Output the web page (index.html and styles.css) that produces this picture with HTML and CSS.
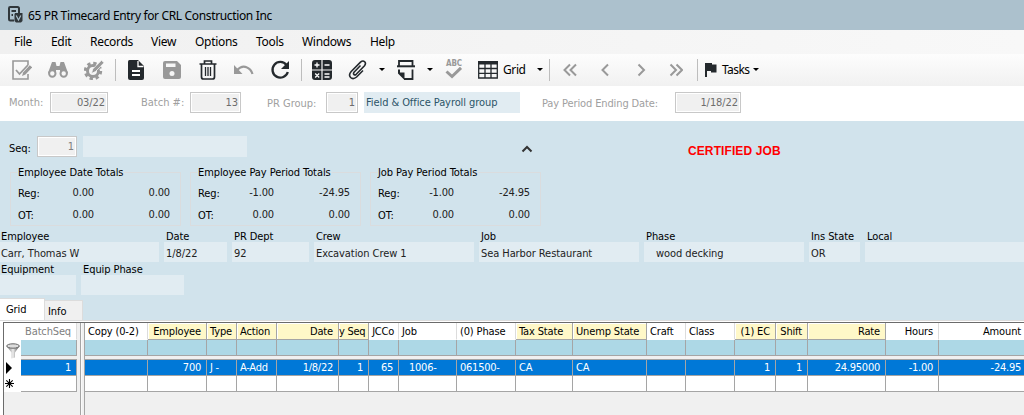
FILE: index.html
```
<!DOCTYPE html>
<html lang="en">
<head>
    <meta charset="UTF-8">
    <title>65 PR Timecard Entry for CRL Construction Inc</title>
    <link rel="stylesheet" href="styles.css">
</head>
<body>
    <div class="titlebar">
        <svg class="app-icon" width="15" height="17" viewBox="0 0 15 17">
            <path d="M6 14.500H2.200Q1 14.500 1 13.300V2.200Q1 1 2.200 1H9.500Q11 1 11 2.500V7" fill="none" stroke="#30373b" stroke-width="2"/>
            <path d="M3.500 5H8M3.500 9H5" stroke="#30373b" stroke-width="1.800"/>
            <path d="M7 7h7.500v8L13 16.500H8L6.500 15V8.500z" fill="#30373b"/>
            <path d="M8.200 9.500l2.300 4.500 2.300-4.500" fill="none" stroke="#acc1cd" stroke-width="1.200"/>
        </svg>
        <span>65 PR Timecard Entry for CRL Construction Inc</span>
    </div>

    <div class="menubar">
        <span>File</span>
        <span>Edit</span>
        <span>Records</span>
        <span>View</span>
        <span>Options</span>
        <span>Tools</span>
        <span>Windows</span>
        <span>Help</span>
    </div>

    <div class="toolbar">
        <div class="btn off">
            <svg width="20" height="20" viewBox="0 0 20 20">
                <path d="M16 5V1H1V19H16V14" fill="none" stroke="currentColor" stroke-width="1.600"/>
                <path d="M4 10l3.500 4L16 5" fill="none" stroke="currentColor" stroke-width="1.800"/>
                <path d="M10 16l1.200-3.800 6.600-7 2.400 2.200-6.700 7z" fill="currentColor"/>
            </svg>
        </div>
        <div class="btn off">
            <svg width="20" height="20" viewBox="0 0 20 20">
                <path d="M4 2h3.500l1 4h3l1-4H16l4 11-8 1V10H8v4l-8-1z" fill="currentColor"/>
                <circle cx="4.300" cy="13.500" r="3.200" fill="#f7f7f7" stroke="currentColor" stroke-width="2"/>
                <circle cx="15.700" cy="13.500" r="3.200" fill="#f7f7f7" stroke="currentColor" stroke-width="2"/>
            </svg>
        </div>
        <div class="btn off">
            <svg width="20" height="20" viewBox="0 0 20 20">
                <circle cx="9" cy="11" r="5.500" fill="none" stroke="currentColor" stroke-width="3"/>
                <circle cx="9" cy="11" r="7.700" fill="none" stroke="currentColor" stroke-width="3" stroke-dasharray="3.300 2.747"/>
                <path d="M7.500 13.500l1.200-4.500L17.500 .3 20 2.800l-8.500 8.700z" fill="currentColor" stroke="#f7f7f7" stroke-width=".8"/>
            </svg>
        </div>
        <div class="sep"></div>
        <div class="btn">
            <svg width="20" height="20" viewBox="0 0 20 20">
                <path d="M3.500 0H12l6 6v12q0 2-2 2H4q-2 0-2-2V1.500Q2 0 3.500 0z" fill="currentColor"/>
                <path d="M12 1v5.500h5.500" fill="none" stroke="#fff" stroke-width="1.300"/>
                <path d="M6 11h8M6 15h8" stroke="#fff" stroke-width="2"/>
            </svg>
        </div>
        <div class="btn off">
            <svg width="20" height="20" viewBox="0 0 20 20">
                <path d="M3 1h12l4 4v12q0 2-2 2H3q-2 0-2-2V3q0-2 2-2z" fill="currentColor"/>
                <path d="M4 3.500h9.500V7H4z" fill="#f7f7f7"/>
                <circle cx="10" cy="13.500" r="2.500" fill="#f7f7f7"/>
            </svg>
        </div>
        <div class="btn">
            <svg width="20" height="20" viewBox="0 0 20 20">
                <path d="M1.500 4h17M6.500 3.500V1h7v2.500" fill="none" stroke="currentColor" stroke-width="1.700"/>
                <path d="M3.500 4v13q0 2 2 2h9q2 0 2-2V4" fill="none" stroke="currentColor" stroke-width="1.700"/>
                <path d="M7.500 7v9M12.500 7v9M10 7v9" stroke="currentColor" stroke-width="1.300"/>
            </svg>
        </div>
        <div class="btn off">
            <svg width="20" height="20" viewBox="0 0 20 20">
                <path d="M3 10q5-5 9.500-2.800 4.500 1.600 6 6.800" fill="none" stroke="currentColor" stroke-width="2.200"/>
                <path d="M0 5v9h8.500z" fill="currentColor"/>
            </svg>
        </div>
        <div class="btn">
            <svg width="20" height="20" viewBox="0 0 20 20">
                <path d="M16.500 5A7.800 7.800 0 1 0 17.800 12" fill="none" stroke="currentColor" stroke-width="2.300"/>
                <path d="M19 1v8h-8z" fill="currentColor"/>
            </svg>
        </div>
        <div class="sep"></div>
        <div class="btn">
            <svg width="20" height="20" viewBox="0 0 20 20">
                <path d="M3 0h6.400v9.400H0V3q0-3 3-3zM10.600 0H17q3 0 3 3v6.400h-9.400zM0 10.600h9.400V20H3q-3 0-3-3zM10.600 10.600H20V17q0 3-3 3h-6.400z" fill="currentColor"/>
                <path d="M2.500 5h5M5 2.500v5M12.500 5h5M3.200 13.500l4 4M7.200 13.500l-4 4M12.500 14h5M12.500 17h5" stroke="#fff" stroke-width="1.300"/>
            </svg>
        </div>
        <div class="btn">
            <svg width="20" height="20" viewBox="0 0 20 20">
                <path d="M12.500 5.500L6 12.300q-1 1.500 0 2.300 1 .8 2.200-.3l8.300-8.500q1.800-2.300.2-4-1.800-1.700-4.200.4L3.200 11.500q-3 3.500-.6 6 2.500 2.400 6-.5L15 10.500" fill="none" stroke="currentColor" stroke-width="1.600"/>
            </svg>
        </div>
        <div class="arrow"></div>
        <div class="btn">
            <svg width="20" height="20" viewBox="0 0 20 20">
                <path d="M3 6V1h13.500v5" fill="none" stroke="currentColor" stroke-width="1.800"/>
                <path d="M1 6.300h18" stroke="currentColor" stroke-width="2"/>
                <path d="M16.500 9.500V19H8" fill="none" stroke="currentColor" stroke-width="1.800"/>
                <path d="M2 9.500h2v3h4.500V20L2 13.500z" fill="currentColor"/>
            </svg>
        </div>
        <div class="arrow"></div>
        <div class="btn off spell">
            <span>ABC</span>
            <svg width="18" height="12" viewBox="0 0 18 12">
                <path d="M1.500 4.500l5.500 5L16 .8" fill="none" stroke="currentColor" stroke-width="3"/>
            </svg>
        </div>
        <div class="btn grid-btn">
            <svg width="20" height="18" viewBox="0 0 20 18">
                <path d="M.7 1h18.600v16H.7zM.7 7.500h18.600M.7 12.300h18.600M7 3v14M13 3v14" fill="none" stroke="currentColor" stroke-width="1.300"/>
                <path d="M0 0h20v3.500H0z" fill="currentColor"/>
            </svg>
        </div>
        <span class="btn-text grid-text">Grid</span>
        <div class="arrow"></div>
        <div class="sep"></div>
        <div class="btn nav off"><svg width="14" height="14" viewBox="0 0 14 14"><path d="M7 1.500L1.500 7 7 12.500M13 1.500L7.500 7 13 12.500"/></svg></div>
        <div class="btn nav off"><svg width="14" height="14" viewBox="0 0 14 14"><path d="M10 1.500L4.500 7l5.500 5.500"/></svg></div>
        <div class="btn nav off"><svg width="14" height="14" viewBox="0 0 14 14"><path d="M4.500 1.500L10 7l-5.500 5.500"/></svg></div>
        <div class="btn nav off"><svg width="14" height="14" viewBox="0 0 14 14"><path d="M1.500 1.500L7 7l-5.500 5.500M7.500 1.500L13 7l-5.500 5.500"/></svg></div>
        <div class="sep"></div>
        <div class="btn flag">
            <svg width="12" height="14" viewBox="0 0 12 14"><path d="M0 0h7v1.500h4.500v8H6V8H2v6H0z" fill="currentColor"/></svg>
        </div>
        <span class="btn-text tasks-text">Tasks</span>
        <div class="arrow"></div>
    </div>

    <div class="batch">
        <span>Month:</span>
        <div class="box">03/22</div>
        <span>Batch #:</span>
        <div class="box">13</div>
        <span class="low">PR Group:</span>
        <div class="box">1</div>
        <div class="group-name">Field &amp; Office Payroll group</div>
        <span class="low ending">Pay Period Ending Date:</span>
        <div class="box">1/18/22</div>
    </div>

    <div class="panel">
        <div class="seq-row">
            <span class="seq-label">Seq:</span>
            <div class="box">1</div>
            <div class="field seq-name"></div>
            <svg class="collapse" width="12" height="8" viewBox="0 0 12 8"><path d="M1.500 6.500L6 2l4.500 4.500" fill="none" stroke="#333" stroke-width="2"/></svg>
            <span class="certified">CERTIFIED JOB</span>
        </div>

        <div class="totals">
            <fieldset>
                <legend>Employee Date Totals</legend>
                <div class="total"><span>Reg:</span><b>0.00</b><b>0.00</b></div>
                <div class="total"><span>OT:</span><b>0.00</b><b>0.00</b></div>
            </fieldset>
            <fieldset>
                <legend>Employee Pay Period Totals</legend>
                <div class="total"><span>Reg:</span><b>-1.00</b><b>-24.95</b></div>
                <div class="total"><span>OT:</span><b>0.00</b><b>0.00</b></div>
            </fieldset>
            <fieldset>
                <legend>Job Pay Period Totals</legend>
                <div class="total"><span>Reg:</span><b>-1.00</b><b>-24.95</b></div>
                <div class="total"><span>OT:</span><b>0.00</b><b>0.00</b></div>
            </fieldset>
        </div>

        <div class="info first">
            <div><label>Employee</label><div class="field">Carr, Thomas W</div></div>
            <div><label>Date</label><div class="field">1/8/22</div></div>
            <div><label>PR Dept</label><div class="field">92</div></div>
            <div><label>Crew</label><div class="field">Excavation Crew 1</div></div>
            <div><label>Job</label><div class="field">Sea Harbor Restaurant</div></div>
            <div><label>Phase</label><div class="field indent">wood decking</div></div>
            <div><label>Ins State</label><div class="field">OR</div></div>
            <div><label>Local</label><div class="field"></div></div>
        </div>
        <div class="info second">
            <div><label>Equipment</label><div class="field"></div></div>
            <div><label>Equip Phase</label><div class="field"></div></div>
        </div>

        <div class="tabs">
            <div class="tab active">Grid</div>
            <div class="tab">Info</div>
        </div>
    </div>

    <div class="sheet">
        <div class="row-heads">
            <svg class="filter" width="14" height="16" viewBox="0 0 14 16">
                <defs>
                    <linearGradient id="metal">
                        <stop offset="0" stop-color="#666"/>
                        <stop offset=".5" stop-color="#eee"/>
                        <stop offset="1" stop-color="#444"/>
                    </linearGradient>
                </defs>
                <path d="M.5 3L5.500 9.500v6l3.500-1V9.500L13.500 3z" fill="url(#metal)"/>
                <ellipse cx="7" cy="3" rx="6.300" ry="2.200" fill="#ddd" stroke="#666"/>
            </svg>
            <svg class="current" width="6" height="12" viewBox="0 0 6 12"><path d="M0 0l6 6-6 6z"/></svg>
            <svg class="new" width="9" height="9" viewBox="0 0 9 9"><path d="M4.500 0v9M0 4.500h9M1.300 1.300l6.400 6.400M7.700 1.300L1.300 7.700" stroke="#000" stroke-width="1.100"/></svg>
        </div>

        <div class="pane fixed">
            <div class="row head"><div class="right muted">BatchSeq</div></div>
            <div class="row search"><div></div></div>
            <div class="row selected"><div class="right">1</div></div>
            <div class="row"><div></div></div>
        </div>

        <div class="splitter"></div>

        <div class="pane scroll">
            <div class="row head">
                <div>Copy (0-2)</div>
                <div class="req right">Employee</div>
                <div class="req">Type</div>
                <div class="req">Action</div>
                <div class="req right">Date</div>
                <div class="req right tight">y Seq</div>
                <div class="right tight">JCCo</div>
                <div>Job</div>
                <div>(0) Phase</div>
                <div class="req">Tax State</div>
                <div class="req">Unemp State</div>
                <div>Craft</div>
                <div>Class</div>
                <div class="req right">(1) EC</div>
                <div class="req right">Shift</div>
                <div class="req right">Rate</div>
                <div class="right">Hours</div>
                <div class="right last">Amount</div>
            </div>
            <div class="row search">
                <div></div><div></div><div></div><div></div><div></div><div></div>
                <div></div><div></div><div></div><div></div><div></div><div></div>
                <div></div><div></div><div></div><div></div><div></div><div></div>
            </div>
            <div class="row selected">
                <div></div>
                <div class="right">700</div>
                <div>J -</div>
                <div>A-Add</div>
                <div class="right">1/8/22</div>
                <div class="right">1</div>
                <div class="right">65</div>
                <div class="job">1006-</div>
                <div>061500-</div>
                <div>CA</div>
                <div>CA</div>
                <div></div>
                <div></div>
                <div class="right">1</div>
                <div class="right">1</div>
                <div class="right">24.95000</div>
                <div class="right">-1.00</div>
                <div class="right last">-24.95</div>
            </div>
            <div class="row">
                <div></div><div></div><div></div><div></div><div></div><div></div>
                <div></div><div></div><div></div><div></div><div></div><div></div>
                <div></div><div></div><div></div><div></div><div></div><div></div>
            </div>
        </div>
    </div>
</body>
</html>
```

FILE: styles.css
```
* {
    box-sizing: border-box;
}
body {
    margin: 0;
    width: 1024px;
    height: 415px;
    overflow: hidden;
    background: #fff;
    color: #111;
    font-family: "DejaVu Sans Condensed", "DejaVu Sans", sans-serif;
    font-stretch: condensed;
    font-size: 11px;
    line-height: 14px;
    letter-spacing: -0.08px;
    white-space: nowrap;
}

/* title and menu */
.titlebar {
    display: flex;
    align-items: center;
    height: 30px;
    padding: 1px 0 0 8px;
    gap: 5px;
    background: #acc1cd;
    color: #000;
    font-family: "Noto Sans", sans-serif;
    font-stretch: normal;
    font-size: 12px;
    letter-spacing: -0.35px;
}
.app-icon {
    margin-top: -3px;
}
.menubar {
    display: grid;
    grid-template-columns: 37px 39px 61px 44px 61px 46px 68px 60px;
    align-items: center;
    height: 24px;
    padding-left: 14px;
    background: linear-gradient(90deg, #f0f0f0, #f8f8f8);
    color: #000;
    font-family: "Noto Sans", sans-serif;
    font-stretch: normal;
    font-size: 12px;
    letter-spacing: -0.3px;
}

/* toolbar */
.toolbar {
    display: flex;
    align-items: center;
    height: 32px;
    padding-left: 4px;
    padding-bottom: 1px;
    background: linear-gradient(#fdfdfd, #f1f1f1);
    color: #24292d;
}
.btn {
    display: flex;
    align-items: center;
    justify-content: center;
    flex: none;
    width: 36px;
    height: 24px;
}
.btn.off {
    color: #999;
}
.sep {
    flex: none;
    width: 6px;
    height: 22px;
    background: linear-gradient(#bdbdbd, #bdbdbd) 3px 0 / 1px 100% no-repeat;
}
.arrow {
    flex: none;
    width: 12px;
    height: 3px;
    background: #000;
    clip-path: polygon(3px 0, 9px 0, 6px 3px);
}
.spell {
    flex-direction: column;
    font-size: 8px;
    line-height: 8px;
    font-weight: bold;
}
.spell svg {
    margin-top: -1px;
}
.grid-btn {
    width: 31px;
}
.btn-text {
    flex: none;
    color: #000;
    font-family: "Noto Sans", sans-serif;
    font-stretch: normal;
    font-size: 12px;
    letter-spacing: -0.4px;
}
.grid-text {
    width: 31px;
}
.tasks-text {
    width: 28px;
    margin-left: 5px;
    letter-spacing: -0.6px;
}
.nav {
    width: 35.5px;
}
.nav path {
    fill: none;
    stroke: currentColor;
    stroke-width: 2;
}
.flag {
    width: 17px;
    justify-content: flex-end;
}

/* batch header */
.batch {
    display: grid;
    grid-template-columns: 41px 58px 33px 49px 51px 26px 59px 32px 6px 156px 22px 133px 66px;
    align-items: start;
    height: 35px;
    padding: 6px 0 0 9px;
    color: #a0a0a0;
}
.batch > :nth-child(1) { grid-column: 1; }
.batch > :nth-child(2) { grid-column: 2; }
.batch > :nth-child(3) { grid-column: 4; }
.batch > :nth-child(4) { grid-column: 5; }
.batch > :nth-child(5) { grid-column: 7; }
.batch > :nth-child(6) { grid-column: 8; }
.batch > :nth-child(7) { grid-column: 10; }
.batch > :nth-child(8) { grid-column: 12; }
.batch > :nth-child(9) { grid-column: 13; }
.batch span {
    padding-top: 4px;
    letter-spacing: 0;
}
.batch .low {
    padding-top: 5px;
}
.batch .ending {
    letter-spacing: -0.12px;
}
.box {
    height: 21px;
    padding: 3px 2px 0;
    border: 1px solid #c8c8c8;
    box-shadow: inset 0 0 0 1px #fff;
    background: #f0f0f0;
    color: #6d6d6d;
    text-align: right;
}
.group-name {
    height: 21px;
    padding: 4px 2px;
    background: #e1ecf2;
    color: #2c5468;
}

/* detail panel */
.panel {
    display: flex;
    flex-direction: column;
    height: 200px;
    background: #d1e3ec;
    color: #000;
}
.seq-row {
    display: flex;
    height: 44px;
    padding: 15px 0 0 9px;
}
.seq-label {
    width: 28px;
    padding-top: 6px;
}
.seq-row .box {
    width: 40px;
    color: #808080;
}
.field {
    height: 20px;
    padding: 5px 2px 0;
    background: #e1ecf2;
    color: #222;
}
.seq-name {
    width: 164px;
    height: 21px;
    margin-left: 6px;
}
.collapse {
    margin: 9px 0 0 274px;
}
.certified {
    margin: 8px 0 0 155px;
    color: #f00;
    font-family: "Liberation Sans", sans-serif;
    font-stretch: normal;
    font-weight: bold;
    font-size: 12px;
    letter-spacing: 0.1px;
}
.totals {
    display: flex;
    gap: 9px;
    height: 64px;
    padding-left: 10px;
}
fieldset {
    width: 171px;
    height: 61px;
    margin: 0;
    padding: 8px 8px 0 7px;
    border: 1px solid #dadcde;
}
legend {
    height: 14px;
    padding: 1px 1px 0;
    margin-left: -1px;
}
.total {
    display: grid;
    grid-template-columns: 28px 48px 76px;
    height: 22px;
}
.total b {
    font-weight: normal;
    text-align: right;
    letter-spacing: -0.15px;
    color: #222;
    margin-top: -1px;
}
.info {
    display: grid;
    gap: 5px;
}
.info.first {
    grid-template-columns: 159px 63px 77px 160px 160px 160px 51px 159px;
}
.info.second {
    grid-template-columns: 76px 103px;
}
.info label {
    display: block;
    height: 13px;
    padding: 1px 0 0 2px;
}
.info > :first-child .field,
.info > :first-child label {
    padding-left: 1px;
}
.info .indent {
    padding-left: 12px;
}
.tabs {
    display: flex;
    align-items: flex-end;
    height: 22px;
    margin-top: auto;
    border-bottom: 1px solid #dcdcdc;
}
.tab {
    width: 38px;
    height: 20px;
    padding: 4px 3px 0;
    border: 1px solid #dcdcdc;
    border-bottom: 0;
    border-left: 0;
    background: #f0f0f0;
}
.tab.active {
    width: 45px;
    height: 22px;
    padding-left: 6px;
    background: #fff;
}

/* grid */
.sheet {
    display: flex;
    height: 93px;
    margin: 1px 0 0 3px;
    border-top: 1px solid #6b6b6b;
    border-left: 1px solid #6b6b6b;
    background: #f0f0f0;
    letter-spacing: -0.25px;
}
.sheet > div {
    flex: none;
}
.row-heads {
    display: flex;
    flex-direction: column;
    width: 17px;
    height: 69px;
    padding: 20px 0 0 2px;
    background: #fff;
}
.row-heads .current {
    margin: 3px 0 0;
}
.row-heads .new {
    margin: 5px 0 0 -1px;
}
.row {
    display: grid;
    height: 16px;
    color: #000;
}
.row > div {
    height: 16px;
    padding: 0 0 0 3px;
    overflow: hidden;
    border-right: 1px solid #a5a5a5;
    border-bottom: 1px solid #a5a5a5;
    background: #fff;
}
.scroll .row {
    grid-template-columns: 63px 59px 30px 40px 62px 30px 30px 58px 59px 57px 74px 39px 49px 41px 32px 78px 53px 86px;
}
.fixed {
    width: 56px;
}
.row.head,
.row.head > div {
    height: 17px;
}
.row.head > div {
    padding-top: 2px;
    border-right-color: #dcdcdc;
    border-bottom-color: #fff;
    letter-spacing: -0.15px;
}
.row.head > .req {
    border-right-color: #a5a5a5;
    border-bottom-color: #a5a5a5;
    background: #fff8c8;
    box-shadow: inset 1px 1px #fff;
}
.row > .right {
    padding: 0 5px 0 0;
    text-align: right;
}
.row > .last {
    padding-right: 3px;
}
.row.head > .tight {
    padding-right: 4px;
    letter-spacing: -0.25px;
}
.row.head > .muted {
    color: #808080;
}
.row.search > div {
    background: #add8e6;
}
.row.selected {
    height: 17px;
    margin-top: 3px;
    border-top: 1px solid #a5a5a5;
    color: #fff;
}
.row.selected > div {
    padding-top: 1px;
    background: #0078d7;
}
.row.selected > .job {
    padding-left: 10px;
}
.splitter {
    width: 8px;
    background: linear-gradient(90deg, transparent 3px, #a5a5a5 3px, #a5a5a5 4px, #fafafa 4px, #fafafa 5px, transparent 5px, transparent 7px, #a5a5a5 7px);
}
```
